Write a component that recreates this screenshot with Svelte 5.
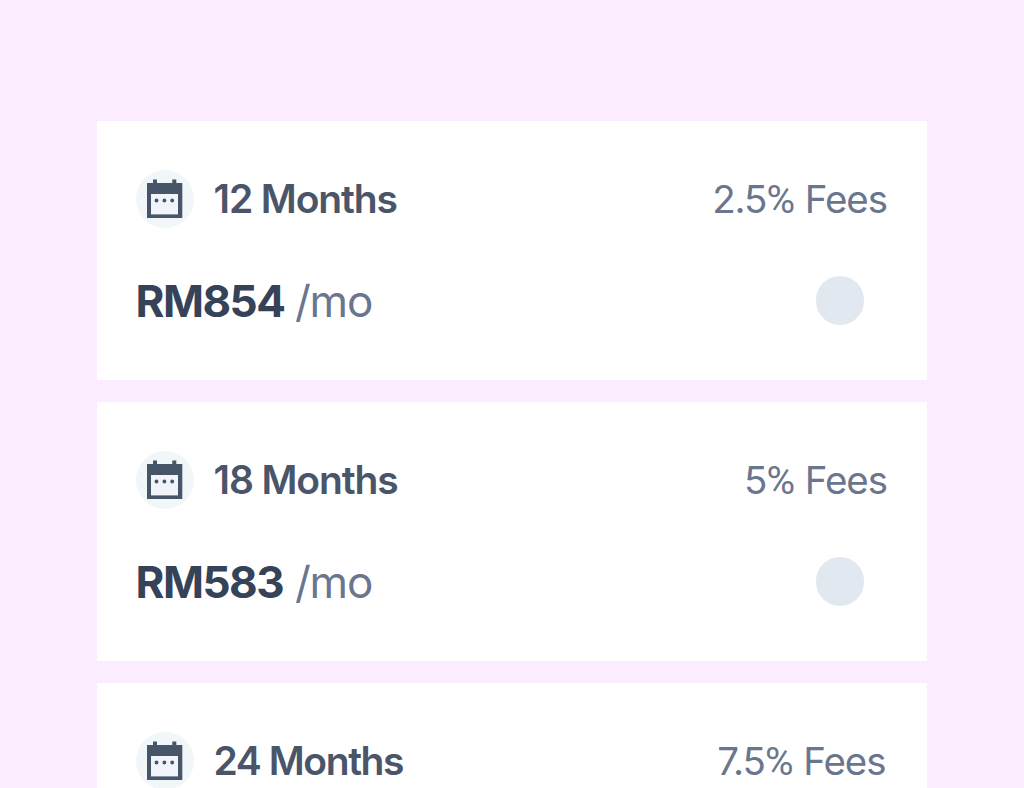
<script>
  const plans = [
    { months: 12, fee: '2.5', price: 'RM854' },
    { months: 18, fee: '5', price: 'RM583' },
    { months: 24, fee: '7.5' }
  ];
</script>

<main>
  {#each plans as plan}
    <section class="card">
      <div class="row head">
        <span class="badge">
          <svg width="58" height="58" viewBox="0 0 58 58">
            <path fill="#475569" d="M17 9.500h4V13h15.300V9.500h4V13H46.300v35H11V13h6z" />
            <path fill="#f1f5fb" d="M15 24h27v20.400H15z" />
            <g fill="#475569">
              <circle cx="20.500" cy="30.500" r="1.900" />
              <circle cx="28.400" cy="30.500" r="1.900" />
              <circle cx="36.200" cy="30.500" r="1.900" />
            </g>
          </svg>
        </span>
        <span class="term" class:tight={plan.months === 24}>{plan.months} Months</span>
        <span class="fee" class:shifted={plan.months === 24}>{plan.fee}<span class="percent">%</span> Fees</span>
      </div>
      {#if plan.price}
        <div class="row body">
          <span class="price">{plan.price}</span>
          <span class="per">/mo</span>
          <span class="radio"></span>
        </div>
      {/if}
    </section>
  {/each}
</main>

<style>
  :global(body) { margin: 0; background: #fbecff; }
  main {
    box-sizing: border-box;
    height: 788px;
    overflow: hidden;
    padding: 121px 97px 0;
    display: flex;
    flex-direction: column;
    gap: 22px;
    background: #fbecff;
    font-family: Inter, sans-serif;
  }
  .card {
    box-sizing: border-box;
    flex: none;
    height: 259px;
    padding: 48px 40px 0 38.500px;
    background: #fff;
  }
  .row { display: flex; align-items: center; white-space: nowrap; }
  .head { height: 59px; }
  .badge {
    width: 58px;
    height: 58px;
    flex: none;
    border-radius: 50%;
    background: #f1f6f9;
  }
  .badge svg { display: block; }
  .term { margin-left: 20px; font-size: 39px; line-height: 48px; font-weight: 600; color: #4a556a; letter-spacing: -1.100px; }
  .term.tight { letter-spacing: -1.400px; }
  .fee { margin-left: auto; font-size: 38.500px; line-height: 48px; color: #6a768e; letter-spacing: -1.050px; }
  .fee.shifted { margin-right: 1.500px; }
  .percent { font-family: Roboto, sans-serif; font-size: 39px; line-height: 1; letter-spacing: 0; }
  .body { height: 60px; margin-top: 43px; }
  .price { width: 148px; font-size: 44px; font-weight: 700; color: #364257; letter-spacing: -1.500px; }
  .per { margin-left: 11.500px; font-size: 44px; color: #6a768e; letter-spacing: -1.250px; }
  .radio { margin: -1px 23px 0 auto; width: 48.500px; height: 48.500px; border-radius: 50%; background: #e2e8f0; }
</style>
